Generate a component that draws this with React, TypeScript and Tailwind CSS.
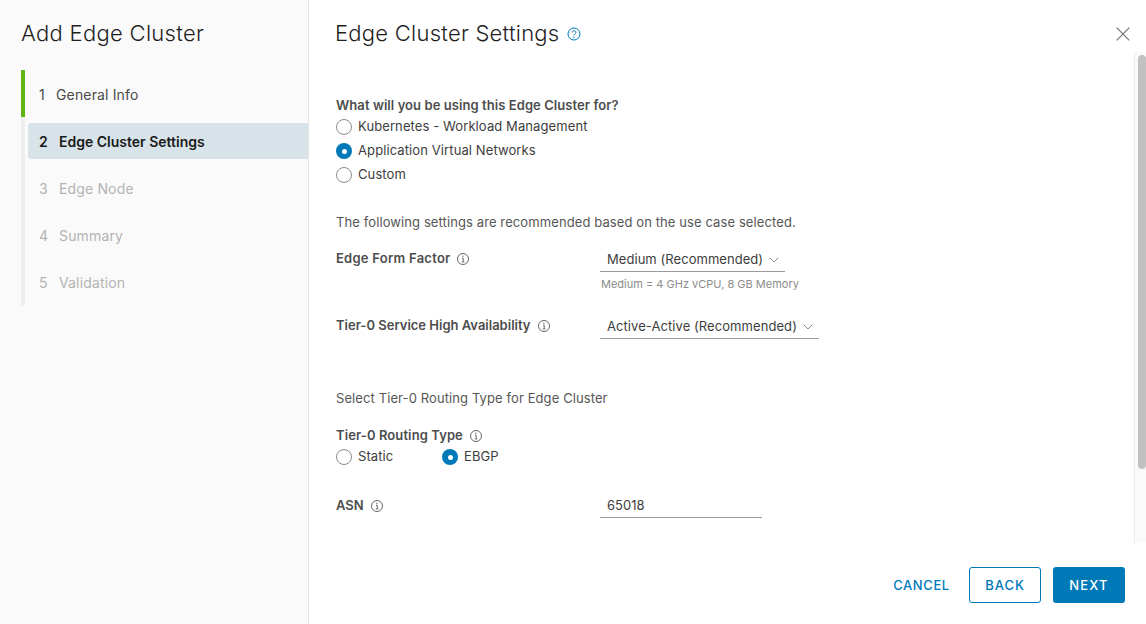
import React from "react";

const Info = () => (
  <svg width="14" height="14" viewBox="0 0 14 14" fill="none" stroke="#666" strokeWidth="1" className="shrink-0">
    <circle cx="7" cy="7" r="5.5" />
    <path d="M6 6.2h1.2v3.6M5.8 9.9h2.6" />
    <circle cx="6.9" cy="4.3" r="0.7" fill="#666" stroke="none" />
  </svg>
);

const Chevron = () => (
  <svg width="10" height="6" viewBox="0 0 10 6" fill="none" stroke="#8c8c8c" strokeWidth="1" className="shrink-0">
    <path d="M0.7 0.7L5 5L9.3 0.7" />
  </svg>
);

const Radio = ({ checked, label, className = "" }: { checked?: boolean; label: string; className?: string }) => (
  <div className={`flex items-center h-6 ${className}`}>
    {checked ? (
      <span className="w-4 h-4 rounded-full bg-[#0079b8] flex items-center justify-center shrink-0">
        <span className="w-[5px] h-[5px] rounded-full bg-white" />
      </span>
    ) : (
      <span className="w-4 h-4 rounded-full border border-[#8c8c8c] bg-white shrink-0" />
    )}
    <span className="ml-[6px] text-[13px] text-[#3d3d3d] tracking-[0.1px]">{label}</span>
  </div>
);

const Step = ({ n, label, state }: { n: number; label: string; state: "done" | "active" | "todo" }) => (
  <div
    className={`h-9 mb-[11px] ml-[3px] pl-[11px] pt-[1px] flex items-center text-[14px] rounded-l-[3px] ${
      state === "active"
        ? "bg-[#d8e3e9] text-[#1a1a1a] font-semibold"
        : state === "done"
        ? "text-[#4a4a4a] tracking-[0.15px]"
        : "text-[#b3b3b3] tracking-[0.15px]"
    }`}
  >
    <span className={state === "done" ? "w-[17px]" : "w-[20px]"}>{n}</span>
    <span>{label}</span>
  </div>
);

export default function App() {
  return (
    <div
      className="w-[1146px] h-[624px] flex bg-white overflow-hidden"
      style={{ fontFamily: "Inter, 'Noto Sans', sans-serif" }}
    >
      <aside className="w-[309px] shrink-0 bg-[#fafafa] border-r border-[#e3e3e3] pl-[21px]">
        <h1 className="pt-[20px] h-[70px] text-[22px] leading-[27px] font-light tracking-[0.3px] text-[#1f1f1f]">Add Edge Cluster</h1>
        <div className="relative border-l-4 border-[#eeeeee] h-[236px] pt-[6px]">
          <div className="absolute -left-[4px] top-0 w-[4px] h-[47px] bg-[#60b515]" />
          <Step n={1} label="General Info" state="done" />
          <Step n={2} label="Edge Cluster Settings" state="active" />
          <Step n={3} label="Edge Node" state="todo" />
          <Step n={4} label="Summary" state="todo" />
          <Step n={5} label="Validation" state="todo" />
        </div>
      </aside>
      <main className="flex-1 flex flex-col min-w-0">
        <header className="h-[52px] shrink-0 flex items-start pl-[26px] pr-[16px] pt-[20px]">
          <h2 className="text-[22px] leading-[27px] font-light tracking-[0.25px] text-[#1f1f1f]">Edge Cluster Settings</h2>
          <svg width="14" height="14" viewBox="0 0 14 14" fill="none" stroke="#0079b8" strokeWidth="1" className="ml-[8px] mt-[7px]">
            <circle cx="7" cy="7" r="6" />
            <path d="M5.2 5.5C5.2 3.2 8.9 3.2 8.9 5.4C8.9 6.8 7 6.8 7 8.4" />
            <circle cx="7" cy="10.2" r="0.7" fill="#0079b8" stroke="none" />
          </svg>
          <svg width="14" height="14" viewBox="0 0 14 14" fill="none" stroke="#737373" strokeWidth="1.2" className="ml-auto mt-[7px]">
            <path d="M0.7 0.7L13.3 13.3M13.3 0.7L0.7 13.3" />
          </svg>
        </header>
        <div className="flex h-[491px] shrink-0">
          <div className="flex-1 pl-[27px] pt-[45px] text-[#4d4d4d]">
            <div className="text-[13px] leading-4 font-semibold tracking-[0.07px] text-[#4d4d4d]">What will you be using this Edge Cluster for?</div>
            <div className="mt-[2px]">
              <Radio label="Kubernetes - Workload Management" />
              <Radio checked label="Application Virtual Networks" />
              <Radio label="Custom" />
            </div>
            <p className="mt-[27px] text-[13px] leading-4 text-[#565656] tracking-[0.1px]">
              The following settings are recommended based on the use case selected.
            </p>
            <div className="mt-[18px] flex">
              <div className="w-[264px] flex items-center gap-[6px] h-[16px] mt-[3px] text-[13px] font-semibold tracking-[0.25px]">
                <span>Edge Form Factor</span>
                <Info />
              </div>
              <div>
                <div className="w-[185px] h-[24px] pl-[7px] pr-[6px] border-b border-[#9a9a9a] flex items-center justify-between text-[13px] text-[#3d3d3d] tracking-[0.05px]">
                  <span>Medium (Recommended)</span>
                  <Chevron />
                </div>
                <div className="mt-[5px] pl-[1px] text-[11px] leading-[14px] text-[#8c8c8c]">Medium = 4 GHz vCPU, 8 GB Memory</div>
              </div>
            </div>
            <div className="mt-[24px] flex">
              <div className="w-[264px] flex items-center gap-[7px] h-[16px] mt-[3px] text-[13px] font-semibold">
                <span>Tier-0 Service High Availability</span>
                <Info />
              </div>
              <div className="w-[219px] h-[24px] pl-[7px] pr-[6px] border-b border-[#9a9a9a] flex items-center justify-between text-[13px] text-[#3d3d3d] tracking-[0.07px]">
                <span>Active-Active (Recommended)</span>
                <Chevron />
              </div>
            </div>
            <p className="mt-[51px] text-[13px] leading-4 text-[#565656] tracking-[0.1px]">
              Select Tier-0 Routing Type for Edge Cluster
            </p>
            <div className="mt-[22px] flex items-center gap-[6px] h-4 text-[13px] font-semibold tracking-[0.1px]">
              <span>Tier-0 Routing Type</span>
              <Info />
            </div>
            <div className="flex mt-[1px]">
              <Radio label="Static" className="w-[106px]" />
              <Radio checked label="EBGP" />
            </div>
            <div className="mt-[25px] flex">
              <div className="w-[264px] flex items-center gap-[6px] h-[16px] mt-[4px] text-[13px] font-semibold">
                <span>ASN</span>
                <Info />
              </div>
              <div className="w-[162px] h-[24px] pl-[7px] border-b border-[#9a9a9a] flex items-center text-[13px] text-[#3d3d3d]">
                65018
              </div>
            </div>
          </div>
          <div className="w-[12px] shrink-0 bg-[#fafafa] border-l border-[#ededed] pl-[3px] pt-[3px]">
            <div className="w-[8px] h-[414px] rounded-t-[4px] rounded-b-[4px] bg-[#c1c1c1]" />
          </div>
        </div>
        <footer className="flex-1 flex items-start justify-end pr-[21px] pt-[24px] text-[13px] font-medium tracking-[1.2px]">
          <button className="h-9 w-[76px] pt-[1px] pr-[3px] tracking-[0.6px] text-[#0079b8]">CANCEL</button>
          <button className="ml-[8px] h-9 w-[72px] pt-[1px] rounded-[3px] border border-[#0079b8] text-[#0079b8] bg-white tracking-[1px]">BACK</button>
          <button className="ml-[12px] h-9 w-[72px] pt-[1px] rounded-[3px] bg-[#0079b8] text-white">NEXT</button>
        </footer>
      </main>
    </div>
  );
}
